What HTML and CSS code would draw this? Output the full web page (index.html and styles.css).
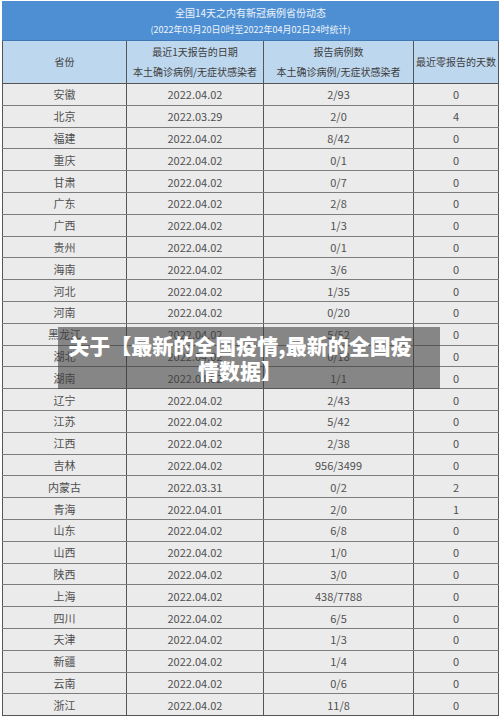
FILE: index.html
```html
<!DOCTYPE html>
<html lang="zh-CN">
<head>
<meta charset="utf-8">
<title>关于【最新的全国疫情,最新的全国疫情数据】</title>
<link rel="stylesheet" href="styles.css">
</head>
<body>
<div class="page">
  <table class="sheet">
    <colgroup>
      <col class="c1"><col class="c2"><col class="c3"><col class="c4">
    </colgroup>
    <thead>
      <tr class="title-row">
        <th colspan="4">
          <div class="title">全国14天之内有新冠病例省份动态</div>
          <div class="subtitle">(2022年03月20日0时至2022年04月02日24时统计)</div>
        </th>
      </tr>
      <tr class="head-row">
        <th>省份</th>
        <th><div>最近1天报告的日期</div><div>本土确诊病例/无症状感染者</div></th>
        <th><div>报告病例数</div><div>本土确诊病例/无症状感染者</div></th>
        <th>最近零报告的天数</th>
      </tr>
    </thead>
    <tbody>
      <tr><td>安徽</td><td>2022.04.02</td><td>2/93</td><td>0</td></tr>
      <tr><td>北京</td><td>2022.03.29</td><td>2/0</td><td>4</td></tr>
      <tr><td>福建</td><td>2022.04.02</td><td>8/42</td><td>0</td></tr>
      <tr><td>重庆</td><td>2022.04.02</td><td>0/1</td><td>0</td></tr>
      <tr><td>甘肃</td><td>2022.04.02</td><td>0/7</td><td>0</td></tr>
      <tr><td>广东</td><td>2022.04.02</td><td>2/8</td><td>0</td></tr>
      <tr><td>广西</td><td>2022.04.02</td><td>1/3</td><td>0</td></tr>
      <tr><td>贵州</td><td>2022.04.02</td><td>0/1</td><td>0</td></tr>
      <tr><td>海南</td><td>2022.04.02</td><td>3/6</td><td>0</td></tr>
      <tr><td>河北</td><td>2022.04.02</td><td>1/35</td><td>0</td></tr>
      <tr><td>河南</td><td>2022.04.02</td><td>0/20</td><td>0</td></tr>
      <tr><td>黑龙江</td><td>2022.04.02</td><td>5/52</td><td>0</td></tr>
      <tr><td>湖北</td><td>2022.04.02</td><td>0/18</td><td>0</td></tr>
      <tr><td>湖南</td><td>2022.04.02</td><td>1/1</td><td>0</td></tr>
      <tr><td>辽宁</td><td>2022.04.02</td><td>2/43</td><td>0</td></tr>
      <tr><td>江苏</td><td>2022.04.02</td><td>5/42</td><td>0</td></tr>
      <tr><td>江西</td><td>2022.04.02</td><td>2/38</td><td>0</td></tr>
      <tr><td>吉林</td><td>2022.04.02</td><td>956/3499</td><td>0</td></tr>
      <tr><td>内蒙古</td><td>2022.03.31</td><td>0/2</td><td>2</td></tr>
      <tr><td>青海</td><td>2022.04.01</td><td>2/0</td><td>1</td></tr>
      <tr><td>山东</td><td>2022.04.02</td><td>6/8</td><td>0</td></tr>
      <tr><td>山西</td><td>2022.04.02</td><td>1/0</td><td>0</td></tr>
      <tr><td>陕西</td><td>2022.04.02</td><td>3/0</td><td>0</td></tr>
      <tr><td>上海</td><td>2022.04.02</td><td>438/7788</td><td>0</td></tr>
      <tr><td>四川</td><td>2022.04.02</td><td>6/5</td><td>0</td></tr>
      <tr><td>天津</td><td>2022.04.02</td><td>1/3</td><td>0</td></tr>
      <tr><td>新疆</td><td>2022.04.02</td><td>1/4</td><td>0</td></tr>
      <tr><td>云南</td><td>2022.04.02</td><td>0/6</td><td>0</td></tr>
      <tr><td>浙江</td><td>2022.04.02</td><td>11/8</td><td>0</td></tr>
    </tbody>
  </table>
  <div class="caption">关于【最新的全国疫情,最新的全国疫情数据】</div>
</div>
</body>
</html>
```

FILE: styles.css
```css
html, body {
  margin: 0;
  padding: 0;
  background: #ffffff;
}

.page {
  position: relative;
  width: 500px;
  height: 718px;
  padding: 1px 2px 0 2px;
  box-sizing: border-box;
  font-family: "Noto Sans CJK SC", "Noto Sans", sans-serif;
}

.sheet {
  width: 496px;
  border-collapse: collapse;
  table-layout: fixed;
  color: #505050;
  font-size: 11px;
}

.c1 { width: 124px; }
.c2 { width: 137px; }
.c3 { width: 150px; }
.c4 { width: 85px; }

.title-row th {
  background: #4d8fd2;
  color: #eef4fb;
  font-weight: normal;
  height: 38px;
  padding: 0;
  border: 1px solid #4d8fd2;
  border-bottom: 1px solid #3f79b3;
  font-size: 10px;
  line-height: 17px;
}

.subtitle {
  font-size: 9px;
}

.head-row th {
  background: #bdd7ee;
  color: #3d3d3d;
  font-weight: normal;
  font-size: 10px;
  height: 42px;
  padding: 0;
  line-height: 20px;
  white-space: nowrap;
  border-left: 1px solid #555;
  border-right: 1px solid #555;
  border-bottom: 1px solid #555;
}

tbody td {
  background: #ebebeb;
  height: 20.8px;
  padding: 0;
  text-align: center;
  line-height: 20px;
  border-left: 1px solid #555;
  border-right: 1px solid #555;
  border-bottom: 1px solid #7d7d7d;
}

tbody tr:last-child td {
  border-bottom: 1px solid #555;
}

.caption {
  position: absolute;
  left: 58px;
  top: 327px;
  width: 382px;
  height: 62px;
  box-sizing: border-box;
  padding: 6px 24px 6px 6px;
  background: rgba(60, 60, 60, 0.58);
  color: #ffffff;
  font-family: "Noto Sans CJK SC", sans-serif;
  font-weight: 900;
  font-size: 21px;
  line-height: 25px;
  text-align: center;
}
```
